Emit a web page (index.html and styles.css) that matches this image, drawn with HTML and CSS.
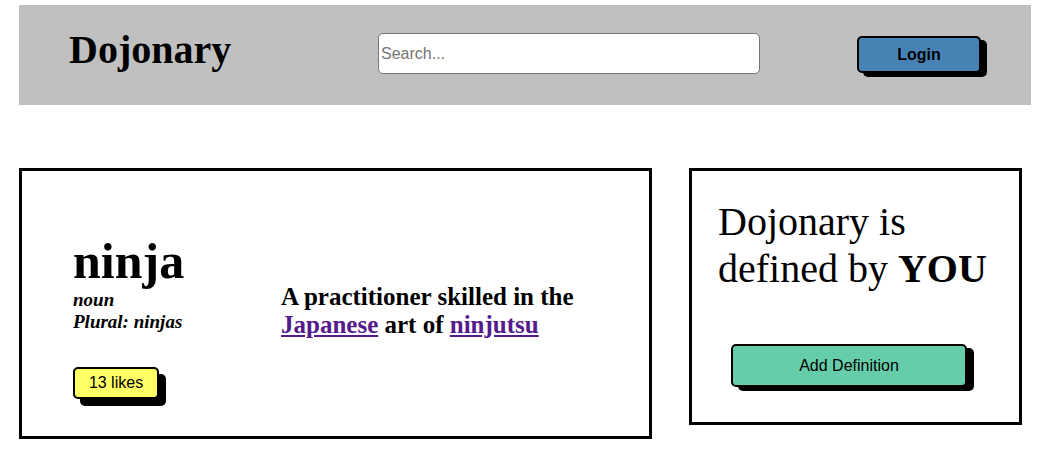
FILE: index.html
```html
<!DOCTYPE html>
<html lang="en">
<head>
<meta charset="utf-8">
<title>Dojonary</title>
<link rel="stylesheet" href="styles.css">
</head>
<body>
<header class="topbar">
  <h1 class="logo">Dojonary</h1>
  <input class="search" type="text" placeholder="Search...">
  <button class="btn btn-login">Login</button>
</header>
<main class="content">
  <section class="card word-card">
    <div class="word-info">
      <h2 class="word">ninja</h2>
      <p class="meta"><em>noun</em><br><em>Plural: ninjas</em></p>
      <button class="btn btn-likes">13 likes</button>
    </div>
    <p class="definition">A practitioner skilled in the <a href="#">Japanese</a> art of <a href="#">ninjutsu</a></p>
  </section>
  <aside class="card cta-card">
    <p class="cta-text">Dojonary is defined by <strong>YOU</strong></p>
    <button class="btn btn-add">Add Definition</button>
  </aside>
</main>
</body>
</html>
```

FILE: styles.css
```css
* { box-sizing: border-box; }

body {
  margin: 0;
  background: #ffffff;
  font-family: "Liberation Serif", "Times New Roman", serif;
  color: #000;
}

.topbar {
  display: flex;
  align-items: flex-start;
  height: 100px;
  margin: 5px 11px 0 19px;
  padding: 0 50px;
  background: #c0c0c0;
}

.logo {
  margin: 22px 0 0;
  font-size: 40px;
  line-height: 46px;
  font-weight: bold;
}

.search {
  margin: 28px 0 0 auto;
  width: 382px;
  height: 41px;
  padding: 1px 2px;
  border: 1px solid #767676;
  border-radius: 5px;
  background: #fff;
  font-family: "Liberation Sans", Arial, sans-serif;
  font-size: 16px;
  color: #000;
}
.search::placeholder { color: #757575; }

.btn {
  border: 2px solid #000;
  border-radius: 5px;
  font-family: "Liberation Sans", Arial, sans-serif;
  font-size: 16px;
  color: #000;
  padding: 0;
  cursor: pointer;
}

.btn-login {
  margin: 31px 0 0 97px;
  width: 124px;
  height: 37px;
  background: #4682b4;
  font-weight: bold;
  box-shadow: 6px 4px 0 #000;
}

.content {
  display: flex;
  align-items: flex-start;
  margin: 63px 0 0 19px;
}

.card {
  border: 3px solid #000;
  background: #fff;
}

.word-card {
  display: flex;
  align-items: flex-start;
  width: 633px;
  padding: 62px 0 37px 51px;
}

.word-info {
  width: 208px;
  flex: 0 0 208px;
}

.word {
  margin: 0;
  font-size: 50px;
  line-height: 56px;
  font-weight: bold;
}

.meta {
  margin: 0;
  font-size: 19px;
  line-height: 22px;
  font-weight: bold;
}

.btn-likes {
  display: block;
  margin-top: 34px;
  width: 86px;
  height: 32px;
  background: #ffff66;
  box-shadow: 7px 7px 0 #000;
}

.definition {
  margin: 50px 0 0;
  width: 340px;
  font-size: 25px;
  line-height: 28px;
  font-weight: bold;
}

.definition a {
  color: #551a8b;
  text-decoration: underline;
}

.cta-card {
  margin-left: 37px;
  width: 333px;
  padding: 27px 16px 35px 26px;
}

.cta-text {
  margin: 0;
  font-size: 40px;
  line-height: 47px;
}

.btn-add {
  display: block;
  margin: 52px 0 0 13px;
  width: 236px;
  height: 43px;
  background: #66cdaa;
  box-shadow: 7px 4px 0 #000;
}
```
